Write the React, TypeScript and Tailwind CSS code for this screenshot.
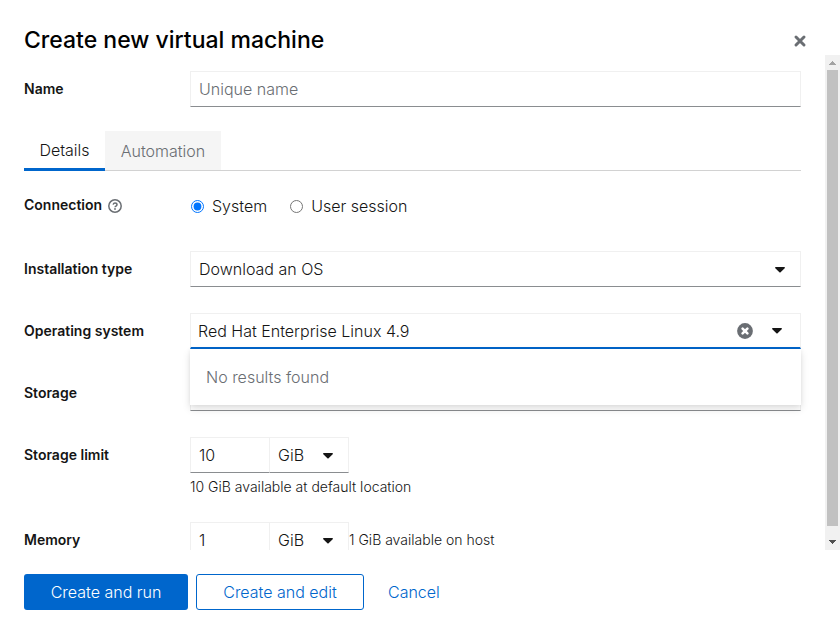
import { useId, useState, type ReactNode } from "react";

const fieldBorder =
  "border border-[#f0f0f0] border-b-[#8a8d90] bg-white text-base leading-6 font-light text-[#151515] outline-none";

function Caret({ className = "" }: { className?: string }) {
  return (
    <svg viewBox="0 0 10 6" className={`h-[6px] w-[10px] ${className}`} fill="currentColor" aria-hidden="true">
      <path d="M0.8 0h8.4c.7 0 1 .8.5 1.200L5.600 5.300c-.3.3-.9.3-1.200 0L.3 1.200C-.2.8.1 0 .8 0z" />
    </svg>
  );
}

function Row({ label, htmlFor, extra, children }: { label: string; htmlFor?: string; extra?: ReactNode; children: ReactNode }) {
  return (
    <div className="grid grid-cols-[166px_minmax(0,1fr)]">
      <div className="flex h-9 items-center gap-[6px] text-sm font-semibold text-[#151515]">
        <label htmlFor={htmlFor}>{label}</label>
        {extra}
      </div>
      <div>{children}</div>
    </div>
  );
}

function Amount({ id, value }: { id: string; value: string }) {
  return (
    <div className="flex w-[159px]">
      <input id={id} defaultValue={value} className={`${fieldBorder} h-9 w-[79px] border-r-0 px-2`} />
      <div className="relative flex-1">
        <select aria-label="Unit" className={`${fieldBorder} h-9 w-full appearance-none px-2`}>
          <option>GiB</option>
          <option>MiB</option>
        </select>
        <Caret className="pointer-events-none absolute top-4 right-4" />
      </div>
    </div>
  );
}

function ScrollBar() {
  return (
    <div className="flex w-[15px] shrink-0 flex-col bg-[#f1f1f1]" aria-hidden="true">
      <svg viewBox="0 0 15 15" className="h-[15px] w-[15px]" shapeRendering="crispEdges">
        <path d="M4 10h7V9h-1V8H9V7H8V6H7v1H6v1H5v1H4z" fill="#a3a3a3" />
      </svg>
      <div className="mx-[2px] mb-[9px] flex-1 bg-[#c1c1c1]" />
      <svg viewBox="0 0 15 15" className="h-[15px] w-[15px]" shapeRendering="crispEdges">
        <path d="M4 5h7v1h-1v1H9v1H8v1H7V8H6V7H5V6H4z" fill="#505050" />
      </svg>
    </div>
  );
}

export default function App() {
  const id = useId();
  const [connection, setConnection] = useState("system");
  const [os, setOs] = useState("Red Hat Enterprise Linux 4.9");

  return (
    <div className="flex h-screen flex-col bg-white font-[Inter,'Noto_Sans',sans-serif] font-light text-[#151515]">
      <header className="flex h-[55px] shrink-0 items-end justify-between pr-[33px] pl-6">
        <h1 className="text-[23px] leading-[29px] font-medium text-black">Create new virtual machine</h1>
        <button type="button" aria-label="Close" className="flex h-7 items-center text-[#6a6e73]">
          <svg viewBox="0 0 14 14" className="h-[14px] w-[14px]" stroke="currentColor" strokeWidth="3" strokeLinecap="round">
            <path d="M3 3l8 8M11 3l-8 8" />
          </svg>
        </button>
      </header>

      <div className="flex min-h-0 flex-1">
        <main className="min-w-0 flex-1 overflow-hidden px-6 pt-4">
          <Row label="Name" htmlFor={`${id}-name`}>
            <input
              id={`${id}-name`}
              placeholder="Unique name"
              className={`${fieldBorder} h-9 w-full px-2 placeholder:text-[#6a6e73]`}
            />
          </Row>

          <div role="tablist" className="mt-6 flex h-10 border-b border-[#d2d2d2] text-base">
            <button role="tab" type="button" aria-selected="true" className="-mb-px h-10 w-[81px] border-b-[3px] border-[#06c]">
              Details
            </button>
            <button role="tab" type="button" aria-selected="false" disabled className="w-[116px] bg-[#f5f5f5] text-[#6a6e73]">
              Automation
            </button>
          </div>

          <div className="flex flex-col gap-[26px] pt-4">
            <Row
              label="Connection"
              extra={
                <button type="button" aria-label="Connection help" className="pt-[2px] text-[#6a6e73]">
                  <svg viewBox="0 0 14 14" className="h-[14px] w-[14px]" fill="none" stroke="currentColor">
                    <circle cx="7" cy="7" r="6.2" strokeWidth="1.500" />
                    <path d="M5.100 5.600c.3-1 1-1.500 1.900-1.500 1.100 0 2 .7 2 1.700 0 1.400-1.900 1.300-1.900 2.500" strokeWidth="1.500" />
                    <circle cx="7" cy="10" r=".9" fill="currentColor" stroke="none" />
                  </svg>
                </button>
              }
            >
              <div className="flex h-[38px] items-center gap-[22px]">
                {[
                  ["system", "System"],
                  ["session", "User session"],
                ].map(([value, text]) => (
                  <label key={value} className="flex items-center gap-2">
                    <input
                      type="radio"
                      name="connection"
                      checked={connection === value}
                      onChange={() => setConnection(value)}
                      className="ml-px h-[13px] w-[13px]"
                    />
                    {text}
                  </label>
                ))}
              </div>
            </Row>

            <Row label="Installation type" htmlFor={`${id}-type`}>
              <div className="relative">
                <select id={`${id}-type`} className={`${fieldBorder} h-9 w-full appearance-none px-2`}>
                  <option>Download an OS</option>
                </select>
                <Caret className="pointer-events-none absolute top-4 right-4" />
              </div>
            </Row>

            <Row label="Operating system" htmlFor={`${id}-os`}>
              <div className="relative">
                <div className="flex h-9 items-center border border-b-2 border-[#f0f0f0] border-b-[#06c] pr-[18px] pl-[7px]">
                  <input
                    id={`${id}-os`}
                    role="combobox"
                    aria-expanded="true"
                    aria-controls={`${id}-menu`}
                    value={os}
                    onChange={(e) => setOs(e.target.value)}
                    className="min-w-0 flex-1 bg-transparent outline-none"
                  />
                  <button type="button" aria-label="Clear" onClick={() => setOs("")} className="text-[#6a6e73]">
                    <svg viewBox="0 0 16 16" className="h-4 w-4">
                      <circle cx="8" cy="8" r="7.900" fill="currentColor" />
                      <path d="M5.600 5.600l4.800 4.800M10.400 5.600l-4.800 4.800" stroke="#fff" strokeWidth="2.600" strokeLinecap="round" />
                    </svg>
                  </button>
                  <button type="button" aria-label="Show options" className="ml-[19px]">
                    <Caret />
                  </button>
                </div>
                <ul
                  id={`${id}-menu`}
                  role="listbox"
                  className="absolute top-full right-0 left-0 z-10 bg-white px-4 py-4 leading-6 text-[#6a6e73] shadow-[0_4px_8px_rgba(3,3,3,0.12),0_0_4px_rgba(3,3,3,0.06)]"
                >
                  <li role="option" aria-selected="false">No results found</li>
                </ul>
              </div>
            </Row>

            <Row label="Storage" htmlFor={`${id}-storage`}>
              <select id={`${id}-storage`} className={`${fieldBorder} h-9 w-full appearance-none px-2`} />
            </Row>

            <Row label="Storage limit" htmlFor={`${id}-limit`}>
              <Amount id={`${id}-limit`} value="10" />
              <p className="mt-1 text-sm leading-[19px]">10 GiB available at default location</p>
            </Row>

            <Row label="Memory" htmlFor={`${id}-memory`}>
              <div className="flex items-center">
                <Amount id={`${id}-memory`} value="1" />
                <span className="text-sm">1 GiB available on host</span>
              </div>
            </Row>
          </div>
        </main>
        <ScrollBar />
      </div>

      <footer className="flex shrink-0 gap-2 p-6 text-base leading-6">
        <button type="button" className="h-9 w-[164px] rounded-[3px] bg-[#06c] text-white">
          Create and run
        </button>
        <button type="button" className="h-9 w-[168px] rounded-[3px] border border-[#06c] text-[#06c]">
          Create and edit
        </button>
        <button type="button" className="h-9 px-4 text-[#06c]">
          Cancel
        </button>
      </footer>
    </div>
  );
}
